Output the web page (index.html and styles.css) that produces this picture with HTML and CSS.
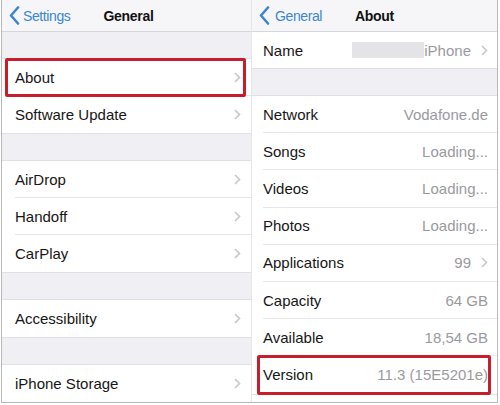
FILE: index.html
```html
<!DOCTYPE html>
<html>
<head>
<meta charset="utf-8">
<link rel="stylesheet" href="styles.css">
</head>
<body>
<div class="frame">
  <section class="panel left">
    <header class="nav">
      <div class="back"><svg class="back-icon" width="11" height="19" viewBox="0 0 11 19"><polyline points="9,1.5 2,9.5 9,17.5" fill="none" stroke="#3b87d2" stroke-width="2.6" stroke-linecap="round" stroke-linejoin="round"/></svg><span>Settings</span></div>
      <div class="title">General</div>
    </header>
    <div class="gap"></div>
    <div class="group">
      <div class="row mark"><span class="label">About</span><svg class="chev" width="7" height="11" viewBox="0 0 7 11"><polyline points="1,1 5.5,5.5 1,10" fill="none" stroke="#c7c7cc" stroke-width="1.6"/></svg></div>
      <div class="row"><span class="label">Software Update</span><svg class="chev" width="7" height="11" viewBox="0 0 7 11"><polyline points="1,1 5.5,5.5 1,10" fill="none" stroke="#c7c7cc" stroke-width="1.6"/></svg></div>
    </div>
    <div class="gap"></div>
    <div class="group">
      <div class="row"><span class="label">AirDrop</span><svg class="chev" width="7" height="11" viewBox="0 0 7 11"><polyline points="1,1 5.5,5.5 1,10" fill="none" stroke="#c7c7cc" stroke-width="1.6"/></svg></div>
      <div class="row"><span class="label">Handoff</span><svg class="chev" width="7" height="11" viewBox="0 0 7 11"><polyline points="1,1 5.5,5.5 1,10" fill="none" stroke="#c7c7cc" stroke-width="1.6"/></svg></div>
      <div class="row"><span class="label">CarPlay</span><svg class="chev" width="7" height="11" viewBox="0 0 7 11"><polyline points="1,1 5.5,5.5 1,10" fill="none" stroke="#c7c7cc" stroke-width="1.6"/></svg></div>
    </div>
    <div class="gap"></div>
    <div class="group">
      <div class="row"><span class="label">Accessibility</span><svg class="chev" width="7" height="11" viewBox="0 0 7 11"><polyline points="1,1 5.5,5.5 1,10" fill="none" stroke="#c7c7cc" stroke-width="1.6"/></svg></div>
    </div>
    <div class="gap"></div>
    <div class="group">
      <div class="row"><span class="label">iPhone Storage</span><svg class="chev" width="7" height="11" viewBox="0 0 7 11"><polyline points="1,1 5.5,5.5 1,10" fill="none" stroke="#c7c7cc" stroke-width="1.6"/></svg></div>
    </div>
  </section>
  <section class="panel right">
    <header class="nav">
      <div class="back"><svg class="back-icon" width="11" height="19" viewBox="0 0 11 19"><polyline points="9,1.5 2,9.5 9,17.5" fill="none" stroke="#3b87d2" stroke-width="2.6" stroke-linecap="round" stroke-linejoin="round"/></svg><span>General</span></div>
      <div class="title">About</div>
    </header>
    <div class="group">
      <div class="row name"><span class="label">Name</span><span class="value"><span class="blur"></span>iPhone</span><svg class="chev" width="7" height="11" viewBox="0 0 7 11"><polyline points="1,1 5.5,5.5 1,10" fill="none" stroke="#c7c7cc" stroke-width="1.6"/></svg></div>
    </div>
    <div class="gap"></div>
    <div class="group">
      <div class="row"><span class="label">Network</span><span class="value">Vodafone.de</span></div>
      <div class="row"><span class="label">Songs</span><span class="value">Loading...</span></div>
      <div class="row"><span class="label">Videos</span><span class="value">Loading...</span></div>
      <div class="row"><span class="label">Photos</span><span class="value">Loading...</span></div>
      <div class="row"><span class="label">Applications</span><span class="value">99</span><svg class="chev" width="7" height="11" viewBox="0 0 7 11"><polyline points="1,1 5.5,5.5 1,10" fill="none" stroke="#c7c7cc" stroke-width="1.6"/></svg></div>
      <div class="row"><span class="label">Capacity</span><span class="value">64 GB</span></div>
      <div class="row"><span class="label">Available</span><span class="value">18,54 GB</span></div>
      <div class="row mark"><span class="label">Version</span><span class="value">11.3 (15E5201e)</span></div>
    </div>
  </section>
</div>
</body>
</html>
```

FILE: styles.css
```css
html, body {
  margin: 0;
  padding: 0;
  background: #ffffff;
}
body {
  font-family: "Liberation Sans", Arial, Helvetica, sans-serif;
  font-size: 15px;
  color: #161616;
}
.frame {
  box-sizing: border-box;
  margin-left: 1px;
  width: 497px;
  height: 403px;
  border: 1px solid #b9b9b9;
  border-top: none;
  display: flex;
  background: #ffffff;
  overflow: hidden;
}
.panel {
  display: flex;
  flex-direction: column;
}
.left {
  width: 249px;
  border-right: 1px solid #e6e6e6;
}
.right {
  flex: 1;
}
.nav {
  box-sizing: border-box;
  height: 32px;
  flex: none;
  background: #f6f6f8;
  border-bottom: 1px solid #d6d6da;
  position: relative;
  display: flex;
  align-items: center;
}
.back {
  display: flex;
  align-items: center;
  gap: 3px;
  padding-left: 7px;
  color: #3b87d2;
  font-size: 14px;
  letter-spacing: -0.4px;
}
.right .back {
  gap: 5px;
}
.back-icon {
  display: block;
}
.title {
  position: absolute;
  left: 0;
  right: 0;
  text-align: center;
  font-weight: bold;
  font-size: 14px;
  letter-spacing: -0.3px;
  color: #111;
  pointer-events: none;
}
.left .title {
  padding-left: 4px;
}
.gap {
  flex: none;
  height: 26px;
  background: #efeff4;
}
.group {
  background: #fff;
  border-top: 1px solid #e0e0e4;
  border-bottom: 1px solid #e0e0e4;
  padding-left: 13px;
}
.right .group {
  padding-left: 11px;
}
.right .nav + .group {
  border-top: none;
}
.row {
  box-sizing: border-box;
  height: 37px;
  display: flex;
  align-items: center;
  padding-right: 10px;
  border-bottom: 1px solid #e6e6e9;
  position: relative;
}
.right .row {
  height: 37.2px;
  padding-right: 9px;
}
.row:last-child {
  border-bottom: none;
}
.right .row.name {
  height: 36px;
}
.label {
  flex: 1;
  white-space: nowrap;
}
.value {
  color: #9a9a9e;
  white-space: nowrap;
  display: flex;
  align-items: center;
}
.chev {
  display: block;
  margin-left: 10px;
}
.blur {
  display: inline-block;
  width: 72px;
  height: 16px;
  background: #e4e4e6;
}
.mark::after {
  content: "";
  position: absolute;
  top: -1px;
  bottom: -2px;
  left: -10px;
  right: 5px;
  border: 3px solid #c81e2c;
  border-radius: 2px;
  pointer-events: none;
}
.right .mark::after {
  top: -1px;
  bottom: -1px;
  left: -6px;
  right: 6px;
}
```
